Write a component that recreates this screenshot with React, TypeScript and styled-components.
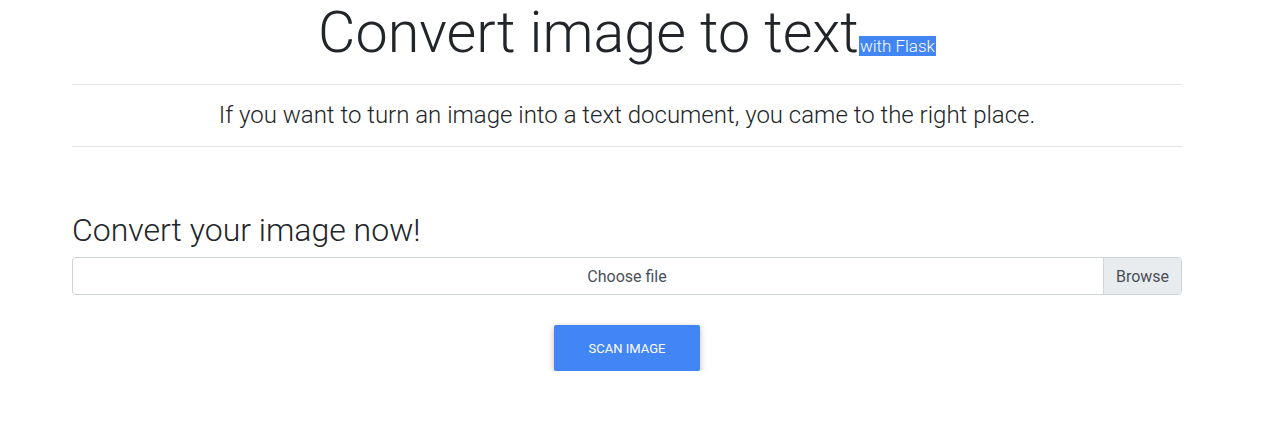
import React from "react";
import styled, { createGlobalStyle } from "styled-components";

const Global = createGlobalStyle`
  html, body { margin: 0; padding: 0; background: #fff; }
  body {
    font-family: Roboto, "Liberation Sans", sans-serif;
    font-weight: 300;
    color: #212529;
  }
  * { box-sizing: border-box; }
`;

const Page = styled.div`
  padding: 0 84px 0 72px;
`;

const Container = styled.div`
  width: 1110px;
`;

const Title = styled.h1`
  margin: 0;
  font-size: 57.5px;
  font-weight: 300;
  line-height: 66px;
  text-align: center;
  height: 84px;
`;

const Mark = styled.mark`
  background: #4285f4;
  color: #fff;
  font-size: 17px;
  font-weight: 300;
  line-height: 20px;
  padding: 0 1px;
  display: inline-block;
`;

const Rule = styled.hr`
  margin: 0;
  border: 0;
  border-top: 1px solid rgba(0, 0, 0, 0.1);
`;

const Lead = styled.p`
  margin: 0;
  height: 61px;
  font-size: 24px;
  font-weight: 300;
  line-height: 61px;
  text-align: center;
`;

const Section = styled.section`
  padding-top: 64px;
`;

const Heading = styled.h2`
  margin: 0 0 8px;
  font-size: 32px;
  font-weight: 300;
  line-height: 38px;
`;

const FileField = styled.label`
  display: flex;
  height: 38px;
  border: 1px solid #ced4da;
  border-radius: 4px;
  overflow: hidden;
  font-size: 16px;
  font-weight: 400;
  color: #495057;
`;

const FileLabel = styled.span`
  flex: 1;
  display: flex;
  align-items: center;
  justify-content: center;
  padding-left: 78px;
`;

const BrowseButton = styled.span`
  width: 78px;
  display: flex;
  align-items: center;
  justify-content: center;
  background: #e9ecef;
  border-left: 1px solid #ced4da;
`;

const Actions = styled.div`
  display: flex;
  justify-content: center;
  padding-top: 30px;
`;

const ScanButton = styled.button`
  width: 146px;
  height: 46px;
  border: 0;
  border-radius: 2px;
  background: #4285f4;
  color: #fff;
  font-family: Roboto, "Liberation Sans", sans-serif;
  font-size: 13px;
  font-weight: 400;
  text-transform: uppercase;
  box-shadow: 0 2px 5px 0 rgba(0, 0, 0, 0.16), 0 2px 10px 0 rgba(0, 0, 0, 0.12);
  cursor: pointer;
`;

export default function App() {
  return (
    <>
      <Global />
      <Page>
        <Container>
          <Title>
            Convert image to text<Mark>with Flask</Mark>
          </Title>
          <Rule />
          <Lead>If you want to turn an image into a text document, you came to the right place.</Lead>
          <Rule />
          <Section>
            <Heading>Convert your image now!</Heading>
            <FileField>
              <FileLabel>Choose file</FileLabel>
              <BrowseButton>Browse</BrowseButton>
            </FileField>
            <Actions>
              <ScanButton>Scan image</ScanButton>
            </Actions>
          </Section>
        </Container>
      </Page>
    </>
  );
}
